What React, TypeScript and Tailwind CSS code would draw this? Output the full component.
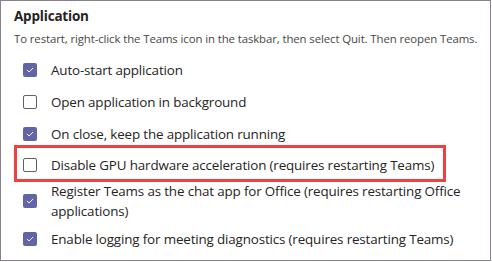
import React from "react";

const options = [
  { label: "Auto-start application", checked: true },
  { label: "Open application in background", checked: false },
  { label: "On close, keep the application running", checked: true },
];

function Checkbox({ checked }: { checked: boolean }) {
  if (checked) {
    return (
      <span className="flex h-[14px] w-[14px] shrink-0 items-center justify-center rounded-[2px] bg-[#6264a7]">
        <svg width="10" height="10" viewBox="0 0 10 10" fill="none">
          <path d="M2.2 5.2 L4.1 7 L7.9 3.2" stroke="white" strokeWidth="1" strokeLinecap="round" strokeLinejoin="round" />
        </svg>
      </span>
    );
  }
  return <span className="h-[14px] w-[14px] shrink-0 rounded-[2px] border border-[#616161] bg-white" />;
}

function Row({ label, checked, className = "" }: { label: string; checked: boolean; className?: string }) {
  return (
    <div className={`flex items-center gap-[14px] ${className}`}>
      <Checkbox checked={checked} />
      <span className="text-[13.4px] leading-[20px] tracking-[-0.15px] text-[#252423]">{label}</span>
    </div>
  );
}

export default function App() {
  return (
    <div
      className="h-[261px] w-[491px] overflow-hidden border border-[#8a7f8e] bg-white"
      style={{ fontFamily: '"Segoe UI", "Open Sans", sans-serif' }}
    >
      <div className="pl-[13px] pt-[5px]">
        <h2 className="text-[13.5px] font-bold leading-[20px] tracking-[-0.2px] text-[#252423]">Application</h2>
        <p className="mt-[5px] whitespace-nowrap text-[11.4px] leading-[16px] tracking-[-0.1px] text-[#484644]">
          To restart, right-click the Teams icon in the taskbar, then select Quit. Then reopen Teams.
        </p>

        <div className="mt-[13px] flex flex-col pl-[9px]">
          <Row {...options[0]} />
          <Row {...options[1]} className="mt-[12px]" />
          <Row {...options[2]} className="mt-[12px]" />
        </div>

        <div className="-mr-px mt-[1px] w-[432px] border-[3px] border-[#ef4141] pb-[4px] pl-[6px] pt-[7px]">
          <Row label="Disable GPU hardware acceleration (requires restarting Teams)" checked={false} />
        </div>

        <div className="-mt-px flex flex-col pl-[9px]">
          <Row label="Register Teams as the chat app for Office (requires restarting Office applications)" checked={true} className="w-[445px]" />
          <Row label="Enable logging for meeting diagnostics (requires restarting Teams)" checked={true} className="mt-[8px]" />
        </div>
      </div>
    </div>
  );
}
